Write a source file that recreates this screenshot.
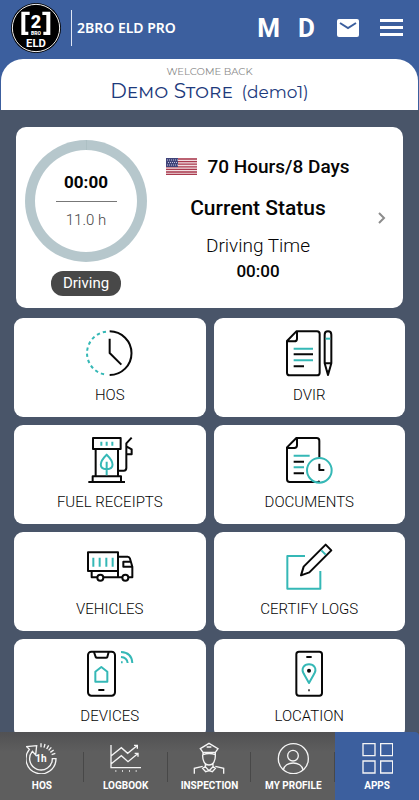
<template>
  <div class="app">
    <header class="top">
      <div class="bar">
        <svg class="logo" viewBox="30 4 156 156" role="img" aria-label="2BRO ELD">
          <circle cx="108" cy="82" r="75" fill="#000" />
          <circle cx="108" cy="82" r="71" fill="none" stroke="#f4f4f4" stroke-width="3" />
          <path d="M89 33H64v70h21V93H76V43h13zM127 33h24v70h-21V93h9V43h-12z" fill="#fff" />
          <text x="108" y="81" class="logo-two">2</text>
          <text x="108" y="104" class="logo-bro">BRO</text>
          <text x="108" y="140" class="logo-eld">ELD</text>
        </svg>
        <span class="brand">2BRO ELD PRO</span>
        <button class="letter" type="button">M</button>
        <button class="letter letter-d" type="button">D</button>
        <button class="mail" type="button" aria-label="Messages">
          <svg viewBox="0 0 22 18">
            <rect width="22" height="18" rx="2" fill="#fff" />
            <path d="M3 4l8 5 8-5" fill="none" stroke="#3c5f9e" stroke-width="2" />
          </svg>
        </button>
        <button class="burger" type="button" aria-label="Menu">
          <i></i><i></i><i></i>
        </button>
      </div>
      <div class="welcome">
        <p>WELCOME BACK</p>
        <h1><span class="store">Demo Store</span> <span class="login">(demo1)</span></h1>
      </div>
    </header>

    <main class="content">
      <section class="status">
        <div class="gauge">
          <div class="ring">
            <strong>00:00</strong>
            <span>11.0 h</span>
          </div>
          <span class="pill">Driving</span>
        </div>
        <div class="info">
          <div class="cycle">
            <svg class="flag" viewBox="0 0 31 17" aria-label="USA">
              <rect width="31" height="17" fill="#f1dfe2" />
              <path d="M0 1h31M0 3.6h31M0 6.2h31M0 8.8h31M0 11.4h31M0 14h31M0 16.4h31" stroke="#a93a4e" stroke-width="1.3" />
              <rect width="12" height="9" fill="#40447a" />
              <path d="M1 2h11M2 4.5h10M1 7h11" stroke="#c5c6df" stroke-width="1" stroke-dasharray="1 1" />
            </svg>
            <span>70 Hours/8 Days</span>
          </div>
          <h2>Current Status</h2>
          <p class="mode">Driving Time</p>
          <strong class="elapsed">00:00</strong>
        </div>
        <button class="more" type="button" aria-label="Open status">
          <svg viewBox="0 0 8 12"><path d="M1 1l5 5-5 5" fill="none" stroke="#8c8c8c" stroke-width="2" /></svg>
        </button>
      </section>

      <section class="tiles">
        <button class="tile" type="button">
          <svg class="icon" viewBox="77 27 144 144">
            <path d="M148 34a65 65 0 0 1 0 131M148 56v43l35 35" />
            <path class="teal" d="M137 35a65 65 0 0 0 0 129" stroke-dasharray="10 9" />
          </svg>
          <span>HOS</span>
        </button>

        <button class="tile" type="button">
          <svg class="icon" viewBox="75 27 144 144">
            <path d="M109 34h62q8 0 8 8v116q0 8-8 8H89q-8 0-8-8V63zM111 35v21q0 8-8 8H82" />
            <path class="teal" d="M101 86h58M101 121h58" />
            <path d="M101 103h58M101 139h31" />
            <path d="M194 130V44q0-10 10-10t10 10v86l-10 35zM195 130h18M201 153l3 10 3-10" />
            <path class="teal" d="M197 56h14" />
          </svg>
          <span>DVIR</span>
        </button>

        <button class="tile" type="button">
          <svg class="icon" viewBox="77 33 144 144">
            <path d="M98 39h83v33H98zM106 73v80M173 73v80M97 170v-16h85v16M84 171h110" />
            <path d="M214 38l-16 17v74q0 8-8 8h-15M198 64l16 9v15h-15" />
            <path class="teal" d="M123 50v12M139 50v12M156 50v12M139 89c-24 23-23 43 0 44 23-1 24-21 0-44zM139 110v41" />
          </svg>
          <span>FUEL RECEIPTS</span>
        </button>

        <button class="tile" type="button">
          <svg class="icon" viewBox="75 33 144 144">
            <path d="M178 98V47q0-8-8-8h-61L81 67v96q0 8 8 8h82q6 0 7-4M111 40v21q0 8-8 8H82" />
            <path class="teal" d="M101 92h48M101 127h31" />
            <path d="M101 110h31M101 145h31" />
            <circle class="teal" cx="178" cy="136" r="37" />
            <path d="M178 116v19h15" />
          </svg>
          <span>DOCUMENTS</span>
        </button>

        <button class="tile" type="button">
          <svg class="icon" viewBox="77 24 144 144">
            <path d="M83 52h90v56H83zM94 109v18h16M131 127h54M173 65h29q5 0 7 6l7 24v32h-12M173 65v62M209 80h-20v15h26" />
            <circle cx="120" cy="128" r="9" />
            <circle cx="195" cy="128" r="9" />
            <path class="teal" d="M99 68v27M118 68v27M138 68v27M157 68v27" />
          </svg>
          <span>VEHICLES</span>
        </button>

        <button class="tile" type="button">
          <svg class="icon" viewBox="675 24 144 144">
            <path class="teal" d="M735 63h-53v98h99v-53" />
            <path d="M797 29l17 17-66 66-25 9 8-26z" />
            <path class="teal" d="M784 46l13 13" />
          </svg>
          <span>CERTIFY LOGS</span>
        </button>

        <button class="tile" type="button">
          <svg class="icon" viewBox="77 30 144 144">
            <rect x="83" y="35" width="81" height="132" rx="10" />
            <path d="M101 36l5 15q1 2 4 2h27q3 0 4-2l4-15M114 150h18" />
            <path class="teal" d="M105 95l18-14 18 14v30h-36zM182 36q32 1 34 33M182 51q18 1 20 18M182 67h5" />
          </svg>
          <span>DEVICES</span>
        </button>

        <button class="tile" type="button">
          <svg class="icon" viewBox="675 30 144 144">
            <rect x="709" y="35" width="77" height="132" rx="8" />
            <path d="M739 51h16M745 151h4" />
            <path class="teal" d="M747 129l-14-25c-13-20 1-31 14-31s27 11 14 31z" />
            <circle cx="747" cy="92" r="3" />
          </svg>
          <span>LOCATION</span>
        </button>
      </section>
    </main>

    <nav class="tabs">
      <a href="#hos">
        <svg viewBox="78 51 96 96">
          <path d="M168 101A45 45 0 1 1 88 73L80 65l30-3-3 28-10-11A34 34 0 1 0 157 101z" />
          <path d="M123 55v12M135 57l-3 11M146 61l-6 11M154 67l-8 9M161 75l-10 7M166 85l-11 4" />
          <text x="123" y="111">1h</text>
        </svg>
        <span>HOS</span>
      </a>
      <a href="#logbook">
        <svg viewBox="329 51 96 96">
          <path d="M332 60v68h90M333 92l30-24 19 17 28-23M401 61h10v10M333 116l30-24 20 18 29-24M403 85h10v10" />
          <path d="M345 138h3M365 138h3M386 138h3M406 138h3" />
        </svg>
        <span>LOGBOOK</span>
      </a>
      <a href="#inspection">
        <svg viewBox="580 51 96 96">
          <path d="M602 71l26-16 27 16-8 11h-37zM610 80v9q18-7 37 0v-9M621 66h14" />
          <path d="M609 89c-1 18 6 31 19 31s20-13 19-31M617 116v9l11 12 12-12v-9M617 125l-8 5 9 10 10-3 10 3 9-10-7-5" />
          <path d="M584 146v-16l25-6M672 146v-16l-25-6" />
        </svg>
        <span>INSPECTION</span>
      </a>
      <a href="#profile">
        <svg viewBox="202 51 96 96">
          <circle cx="251" cy="101" r="45" />
          <circle cx="250" cy="92" r="16" />
          <path d="M221 135c3-28 56-28 59 0" />
        </svg>
        <span>MY PROFILE</span>
      </a>
      <a href="#apps" class="active">
        <svg viewBox="453 51 96 96">
          <path d="M459 56h36v36h-36zM512 56h36v36h-36zM459 108h36v36h-36zM512 108h36v36h-36z" />
        </svg>
        <span>APPS</span>
      </a>
    </nav>
  </div>
</template>

<style>
body {
  background: #495569;
}
</style>

<style scoped>
.app {
  display: flex;
  flex-direction: column;
  height: 100vh;
  overflow: hidden;
  background: #495569;
  color: #050505;
  font-family: Roboto, "Liberation Sans", sans-serif;
}

button {
  padding: 0;
  border: 0;
  background: none;
  color: inherit;
  font-family: inherit;
}

h1, h2, p {
  margin: 0;
}

svg {
  display: block;
}

.top {
  flex: none;
  background: #3c5f9e;
}

.bar {
  display: flex;
  align-items: center;
  height: 55px;
  padding: 0 16px 0 10px;
}

.logo {
  width: 52px;
  height: 52px;
}

.logo text {
  fill: #fff;
  font-family: Roboto, sans-serif;
  font-weight: 900;
  text-anchor: middle;
}

.logo .logo-two {
  font-size: 54px;
}

.logo .logo-bro {
  font-size: 15px;
}

.logo .logo-eld {
  font-family: "Liberation Sans Narrow", Roboto, sans-serif;
  font-weight: 700;
  font-size: 34px;
}

.brand {
  flex: 1;
  margin-left: 9px;
  padding-left: 5px;
  border-left: 1px solid #dfe7f5;
  color: #fff;
  font-family: "Noto Sans", sans-serif;
  font-size: 14px;
  font-weight: 600;
  line-height: 36px;
  white-space: nowrap;
}

.letter {
  color: #fff;
  font-size: 26px;
  font-weight: 700;
  line-height: 32px;
}

.letter-d {
  margin-left: 18px;
}

.mail {
  width: 22px;
  margin-left: 22px;
}

.burger {
  display: flex;
  flex-direction: column;
  gap: 4px;
  width: 23px;
  margin-left: 21px;
}

.burger i {
  height: 3px;
  background: #fff;
}

.welcome {
  height: 47px;
  margin: 4px 1px 0;
  padding-top: 4px;
  border-radius: 22px 22px 0 0;
  background: #fff;
  text-align: center;
  font-family: Montserrat, Lato, sans-serif;
}

.welcome p {
  padding-top: 2px;
  color: #8a8a8a;
  font-size: 10px;
  line-height: 14px;
}

.welcome h1 {
  color: #1d3a7c;
  font-size: 17px;
  font-weight: 400;
  line-height: 24px;
}

.store {
  margin-right: 4px;
  font-size: 20px;
  font-variant: small-caps;
}

.content {
  flex: 1;
  min-height: 0;
  overflow: hidden;
}

.status {
  display: flex;
  align-items: center;
  height: 181px;
  margin: 17px 16px 10px;
  border-radius: 10px;
  background: #fff;
}

.gauge {
  display: flex;
  flex-direction: column;
  align-items: center;
  width: 122px;
  margin-left: 9px;
}

.ring {
  display: flex;
  flex-direction: column;
  align-items: center;
  box-sizing: border-box;
  width: 122px;
  height: 122px;
  padding-top: 22px;
  border: 10px solid #b5c6ca;
  border-radius: 50%;
  /* start mark of the dial */
  background: linear-gradient(#9fb3a8, #9fb3a8) top / 1px 10px no-repeat border-box;
  border-color: rgba(174, 193, 198, 0.9);
}

.ring strong {
  font-size: 17px;
  line-height: 20px;
}

.ring span {
  width: 61px;
  margin-top: 9px;
  padding-top: 8px;
  border-top: 1px solid #777;
  color: #444;
  font-size: 15px;
  font-weight: 300;
  line-height: 20px;
  text-align: center;
}

.pill {
  margin-top: 9px;
  padding: 0 12px;
  border-radius: 12px;
  background: #484848;
  color: #fff;
  font-size: 15px;
  line-height: 25px;
}

.info {
  display: flex;
  flex: 1;
  flex-direction: column;
  align-items: center;
  padding-right: 9px;
}

.cycle {
  display: flex;
  align-items: center;
  gap: 10px;
  font-size: 19px;
  font-weight: 500;
  line-height: 24px;
  white-space: nowrap;
}

.flag {
  width: 31px;
  height: 17px;
}

.info h2 {
  margin-top: 17px;
  font-size: 21px;
  font-weight: 500;
  line-height: 24px;
}

.mode {
  margin-top: 16px;
  font-size: 19px;
  font-weight: 300;
  line-height: 20px;
}

.elapsed {
  margin-top: 5px;
  font-size: 17px;
  font-weight: 500;
  line-height: 20px;
}

.more {
  width: 8px;
  margin-right: 17px;
}

.tiles {
  display: grid;
  grid-template-columns: 1fr 1fr;
  gap: 8px;
  padding: 0 14px;
}

.tile {
  display: flex;
  flex-direction: column;
  align-items: center;
  gap: 10px;
  height: 99px;
  padding-top: 11px;
  border-radius: 9px;
  background: #fff;
  font-size: 15px;
  font-weight: 300;
  line-height: 16px;
}

.icon {
  width: 48px;
  height: 48px;
  fill: none;
  stroke: #080808;
  stroke-width: 6;
  stroke-linejoin: round;
}

.icon .teal {
  stroke: #35b8b6;
}

.tabs {
  display: grid;
  flex: none;
  grid-template-columns: repeat(5, 1fr);
  height: 68px;
  background: linear-gradient(#515153, #5e5e5e 20px);
}

.tabs a {
  display: flex;
  flex-direction: column;
  align-items: center;
  gap: 6px;
  padding-top: 10px;
  background: linear-gradient(#484848, #484848) right 20px / 1px 30px no-repeat;
  color: #fff;
  font-size: 10px;
  font-weight: 700;
  line-height: 12px;
  text-decoration: none;
}

.tabs svg {
  width: 32px;
  height: 32px;
  fill: none;
  stroke: #f5f5f5;
  stroke-width: 4;
}

.tabs text {
  fill: #fff;
  stroke: none;
  font-size: 30px;
  text-anchor: middle;
}

.tabs .active {
  border-radius: 0 4px 0 0;
  background: #3c5f9e;
}
</style>
